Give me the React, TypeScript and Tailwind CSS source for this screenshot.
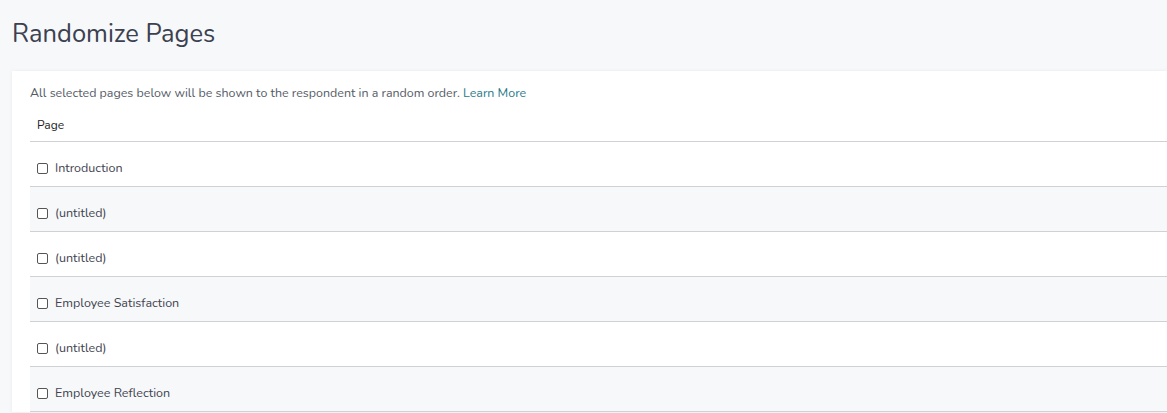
import React from "react";

const rows = [
  "Introduction",
  "(untitled)",
  "(untitled)",
  "Employee Satisfaction",
  "(untitled)",
  "Employee Reflection",
];

export default function App() {
  return (
    <div
      className="min-h-[413px] w-full overflow-hidden bg-[#f7f8fa]"
      style={{ fontFamily: '"Nunito", "Lato", "Open Sans", sans-serif' }}
    >
      <h1 className="pl-[12px] pt-[17px] text-[25.5px] leading-[34px] text-[#3b4150]">
        Randomize Pages
      </h1>
      <div className="ml-[12px] mt-[20px] bg-white pl-[18px] pt-[14px] shadow-[0_0_4px_rgba(0,0,0,0.06)]">
        <p className="text-[12.45px] leading-[16px] text-[#555b66]">
          All selected pages below will be shown to the respondent in a random order.{" "}
          <a className="text-[#2b7a8a]" href="#">
            Learn More
          </a>
        </p>
        <div className="mt-[16px] border-b border-[#cfd1d4] pb-[8px] pl-[7px] text-[12px] leading-[16px] text-[#222]">
          Page
        </div>
        {rows.map((r, i) => (
          <div
            key={i}
            className={`flex h-[45px] items-center border-b border-[#cfd1d4] pl-[7px] pt-[8px] ${
              i % 2 === 1 ? "bg-[#f7f8fa]" : "bg-white"
            }`}
          >
            <span className="mr-[7px] inline-block h-[11px] w-[11px] rounded-[2px] border border-[#555] bg-white" />
            <span className="text-[12.5px] text-[#3f4450]">{r}</span>
          </div>
        ))}
      </div>
    </div>
  );
}
